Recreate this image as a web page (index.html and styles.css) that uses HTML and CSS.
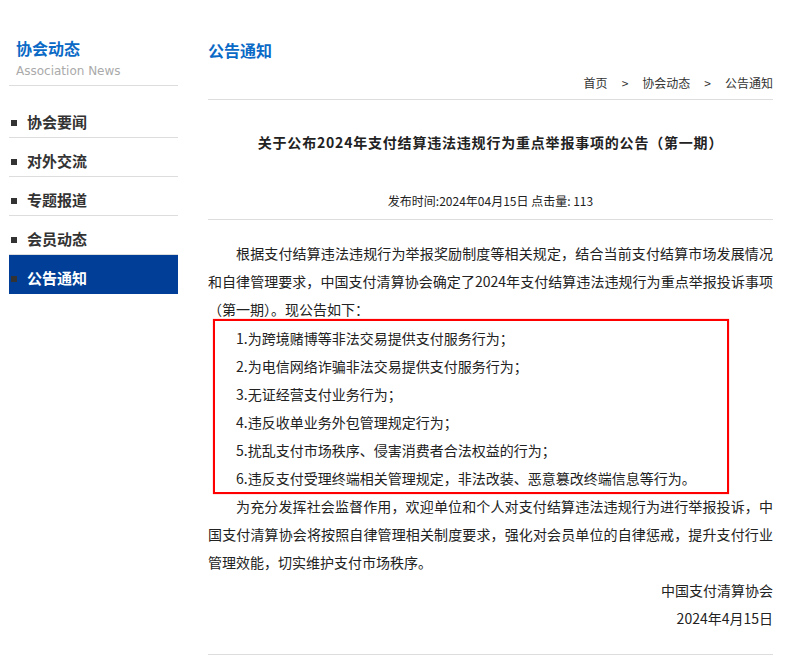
FILE: index.html
```html
<!DOCTYPE html>
<html lang="zh-CN">
<head>
    <meta charset="UTF-8">
    <meta name="viewport" content="width=device-width, initial-scale=1.0">
    <title>公告通知 - 协会动态</title>
    <link rel="stylesheet" href="styles.css">
</head>
<body>
    <div class="page">
        <aside class="sidebar">
            <div class="side-head">
                <h2 class="side-title">协会动态</h2>
                <div class="side-sub">Association News</div>
            </div>
            <ul class="side-menu">
                <li class="menu-item"><span class="dot"></span>协会要闻</li>
                <li class="menu-item"><span class="dot"></span>对外交流</li>
                <li class="menu-item"><span class="dot"></span>专题报道</li>
                <li class="menu-item"><span class="dot"></span>会员动态</li>
                <li class="menu-item active"><span class="dot"></span>公告通知</li>
            </ul>
        </aside>

        <main class="main">
            <h2 class="main-title">公告通知</h2>
            <div class="crumbs">
                <span>首页</span><span class="sep">&gt;</span><span>协会动态</span><span class="sep">&gt;</span><span>公告通知</span>
            </div>

            <div class="article-head">
                <h1 class="article-title">关于公布2024年支付结算违法违规行为重点举报事项的公告（第一期）</h1>
                <div class="article-info">发布时间:2024年04月15日 点击量: 113</div>
            </div>

            <div class="article-body">
                <p class="para">根据支付结算违法违规行为举报奖励制度等相关规定，结合当前支付结算市场发展情况和自律管理要求，中国支付清算协会确定了2024年支付结算违法违规行为重点举报投诉事项（第一期）。现公告如下：</p>
                <div class="red-box">
                    <p>1.为跨境赌博等非法交易提供支付服务行为；</p>
                    <p>2.为电信网络诈骗非法交易提供支付服务行为；</p>
                    <p>3.无证经营支付业务行为；</p>
                    <p>4.违反收单业务外包管理规定行为；</p>
                    <p>5.扰乱支付市场秩序、侵害消费者合法权益的行为；</p>
                    <p>6.违反支付受理终端相关管理规定，非法改装、恶意篡改终端信息等行为。</p>
                </div>
                <p class="para">为充分发挥社会监督作用，欢迎单位和个人对支付结算违法违规行为进行举报投诉，中国支付清算协会将按照自律管理相关制度要求，强化对会员单位的自律惩戒，提升支付行业管理效能，切实维护支付市场秩序。</p>
                <p class="sign">中国支付清算协会</p>
                <p class="sign">2024年4月15日</p>
            </div>
        </main>
    </div>
</body>
</html>
```

FILE: styles.css
```css
body {
    margin: 0;
    background: #fff;
    color: #222;
    font-family: "Noto Sans CJK SC", "DejaVu Sans", sans-serif;
}
.page {
    display: flex;
    gap: 30px;
    padding-left: 9px;
}

/* colonne gauche */
.sidebar {
    width: 169px;
    flex-shrink: 0;
}
.side-head {
    padding: 0 0 6px 7px;
    border-bottom: 1px solid #ddd;
}
.side-title {
    margin: 38px 0 0;
    font-size: 16px;
    line-height: 20px;
    font-weight: bold;
    color: #0a6ac6;
}
.side-sub {
    margin-top: 5px;
    font-family: "DejaVu Sans", sans-serif;
    font-size: 12px;
    line-height: 16px;
    color: #aaa;
}
.side-menu {
    list-style: none;
    margin: 13px 0 0;
    padding: 0;
}
.menu-item {
    display: flex;
    align-items: center;
    height: 39px;
    box-sizing: border-box;
    padding: 7px 0 0 2px;
    border-bottom: 1px solid #ddd;
    font-size: 15px;
    font-weight: bold;
    color: #333;
}
.menu-item .dot {
    width: 6px;
    height: 6px;
    margin: 2px 10px 0 0;
    background: #333;
}
.menu-item.active {
    background: #003e97;
    color: #fff;
    border-bottom-color: #003e97;
}

/* colonne principale */
.main {
    width: 565px;
    flex-shrink: 0;
}
.main-title {
    margin: 40px 0 0;
    font-size: 16px;
    line-height: 20px;
    font-weight: bold;
    color: #0a6ac6;
}
.crumbs {
    margin-top: 13px;
    padding-bottom: 6px;
    border-bottom: 1px solid #ddd;
    text-align: right;
    font-size: 12px;
    line-height: 20px;
    color: #333;
}
.crumbs .sep {
    margin: 0 14px;
}
.article-head {
    padding-bottom: 8px;
    border-bottom: 1px solid #ddd;
    text-align: center;
}
.article-title {
    margin: 32px 0 0;
    font-size: 14px;
    line-height: 20px;
    font-weight: bold;
    letter-spacing: 0.8px;
    color: #222;
}
.article-info {
    margin-top: 39px;
    font-size: 12px;
    line-height: 20px;
    color: #222;
}
.article-body {
    padding-top: 19px;
    padding-bottom: 22px;
    border-bottom: 1px solid #ddd;
    font-size: 14px;
    line-height: 28px;
}
.article-body p {
    margin: 0;
}
.para {
    text-indent: 2em;
    text-align: justify;
}
.red-box {
    width: 516px;
    box-sizing: border-box;
    margin: -4px 0 -2px 5px;
    padding: 3px 0 0 21px;
    border: 2px solid #f00;
    box-shadow: 0 0 1px #f66;
}
.sign {
    text-align: right;
}
```
